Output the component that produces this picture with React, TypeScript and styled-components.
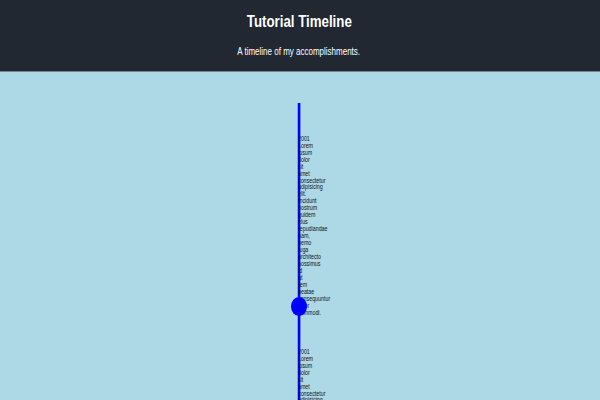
import React from "react";
import styled, { createGlobalStyle } from "styled-components";

const GlobalStyle = createGlobalStyle`
  * { box-sizing: border-box; }
  body {
    margin: 0;
    height: 400px;
    overflow: hidden;
    background: #add8e6;
    font-family: "Liberation Sans", Arial, sans-serif;
  }
`;

const Page = styled.div`
  height: 400px;
  overflow: hidden;
  background: #add8e6;
`;

const Header = styled.header`
  height: 72px;
  background: #222831;
  border-bottom: 1px solid #76868f;
  color: #fff;
  display: flex;
  flex-direction: column;
  align-items: center;
`;

const Title = styled.h1`
  margin: 12px 0 0 -1px;
  font-size: 16px;
  line-height: 20px;
  white-space: nowrap;
  transform: scaleX(0.83);
`;

const Subtitle = styled.p`
  margin: 12px 0 0 -2px;
  font-size: 10px;
  line-height: 15px;
  white-space: nowrap;
  transform: scaleX(0.8);
`;

const Timeline = styled.ul`
  list-style: none;
  margin: 0;
  padding: 31px 0 0 298px;
`;

const Entry = styled.li`
  position: relative;
  width: 2px;
  height: 213px;
  padding-top: 32.7px;
  background: #0000ff;
  box-shadow: -1px 0 0 rgba(0, 0, 255, 0.25), 1px 0 0 rgba(0, 0, 255, 0.35);

  &::after {
    content: "";
    position: absolute;
    left: -7px;
    top: 194px;
    width: 16px;
    height: 19px;
    border-radius: 50%;
    background: #0000ff;
  }
`;

const Copy = styled.div`
  width: 3px;
  margin-left: -0.4px;
  color: #101418;
  font-size: 6.4px;
  line-height: 6.97px;
  transform: scaleX(0.83);
  transform-origin: left;
`;

const text =
  "Lorem ipsum dolor sit amet consectetur adipisicing elit. Incidunt nostrum quidem eius repudiandae nam, nemo fuga architecto possimus id at rem beatae consequuntur error commodi.";

const entries = [
  { year: "2001", text },
  { year: "2001", text },
];

export default function App() {
  return (
    <Page>
      <GlobalStyle />
      <Header>
        <Title>Tutorial Timeline</Title>
        <Subtitle>A timeline of my accomplishments.</Subtitle>
      </Header>
      <Timeline>
        {entries.map((entry, i) => (
          <Entry key={i}>
            <Copy>
              {entry.year} {entry.text}
            </Copy>
          </Entry>
        ))}
      </Timeline>
    </Page>
  );
}
